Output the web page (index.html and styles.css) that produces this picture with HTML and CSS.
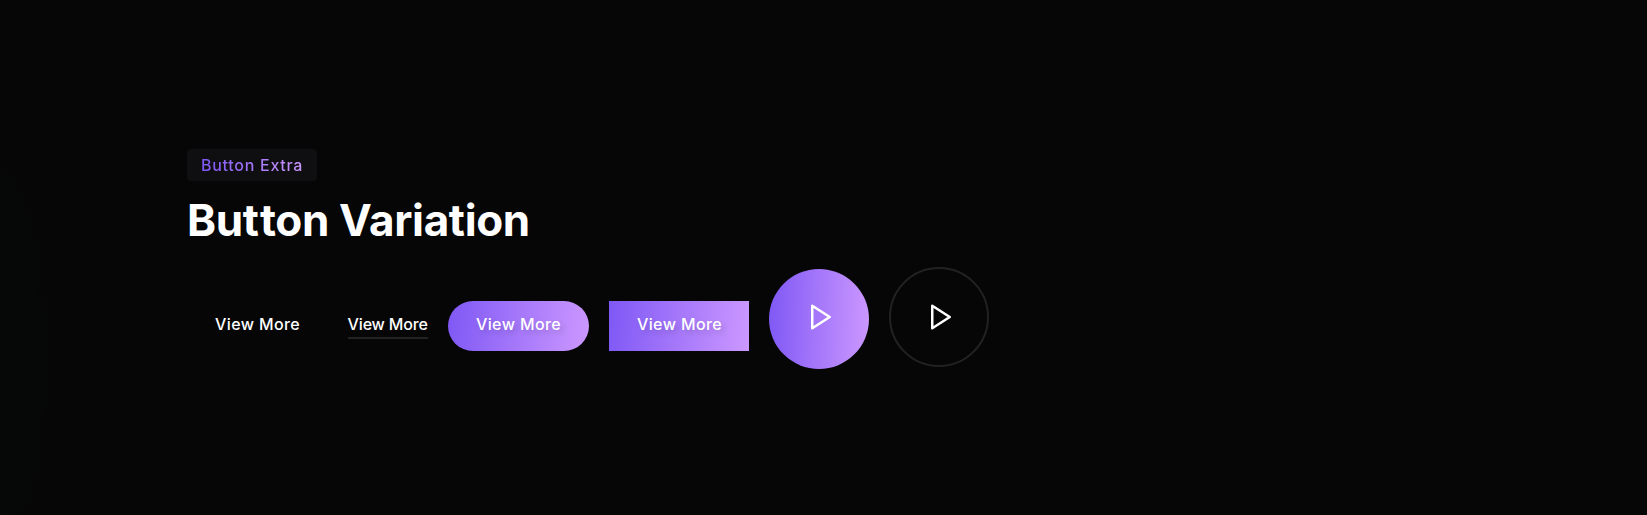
FILE: index.html
```html
<!DOCTYPE html>
<html lang="en">
<head>
<meta charset="utf-8">
<title>Button Variation</title>
<link rel="stylesheet" href="styles.css">
</head>
<body>
<main class="section">
  <span class="subtitle"><span class="subtitle-text">Button Extra</span></span>
  <h1 class="title">Bu<span class="loose">t</span>ton Variation</h1>
  <div class="buttons">
    <a class="btn btn-plain">View More</a>
    <a class="btn-read">View More</a>
    <a class="btn btn-fill btn-round">View More</a>
    <a class="btn btn-fill">View More</a>
    <a class="play play-fill"><svg class="icon" viewBox="0 0 24 24"><polygon points="5 3 19 12 5 21 5 3"/></svg></a>
    <a class="play play-outline"><svg class="icon" viewBox="0 0 24 24"><polygon points="5 3 19 12 5 21 5 3"/></svg></a>
  </div>
</main>
</body>
</html>
```
FILE: styles.css
```css
* { box-sizing: border-box; }
body {
  margin: 0;
  min-height: 515px;
  background: radial-gradient(ellipse 46px 190px at 0 357px, #050807 85%, #060606) #060606;
  color: #fff;
  font-family: Inter, sans-serif;
  font-feature-settings: "calt" 0, "liga" 0, "dlig" 0;
}
.section { padding: 149px 0 0 187px; display: flex; flex-direction: column; align-items: flex-start; }
.subtitle {
  width: 130px;
  height: 32px;
  padding: 0 14px;
  border-radius: 4px;
  background: #0f0f11;
  font-size: 16px;
  line-height: 32px;
  font-weight: 500;
  letter-spacing: 0.72px;
  white-space: nowrap;
}
.subtitle-text {
  display: block;
  background: linear-gradient(95deg, #7f58f5 5%, #cc98ff 100%);
  -webkit-background-clip: text;
  background-clip: text;
  color: transparent;
}
.title {
  margin: 11px 0 0;
  font-size: 44px;
  line-height: 56px;
  font-weight: 650;
  font-optical-sizing: none;
  letter-spacing: -0.35px;
}
.loose { letter-spacing: 1.1px; }
.buttons { display: flex; align-items: flex-start; margin-top: 19px; }
.btn {
  width: 140.6px;
  height: 50px;
  margin: 34px 20px 0 0;
  padding: 0 28px;
  font-size: 16px;
  line-height: 46px;
  font-weight: 480;
  letter-spacing: 0.38px;
  white-space: nowrap;
}
.btn-fill { width: 140px; background: linear-gradient(95deg, #7f58f5, #cc98ff 100%); text-shadow: 3px 3px 6px rgba(0, 0, 0, 0.16); }
.btn-round { width: 141px; border-radius: 500px; }
.btn-read {
  width: 80px;
  margin: 46px 20.4px 0 0;
  border-bottom: 2px solid #222;
  font-size: 16px;
  line-height: 23px;
  height: 26px;
  font-weight: 480;
  letter-spacing: -0.16px;
  white-space: nowrap;
}
.play { width: 100px; height: 100px; border-radius: 50%; display: grid; place-items: center; padding-left: 4px; }
.play-fill { background: linear-gradient(92deg, #7f58f5, #cc98ff 100%); margin: 2px 20px 0 0; padding-bottom: 4px; }
.play-outline { border: 2px solid #222; }
.icon { width: 30px; height: 30px; fill: none; stroke: #fff; stroke-width: 2; stroke-linecap: round; stroke-linejoin: round; }
```
